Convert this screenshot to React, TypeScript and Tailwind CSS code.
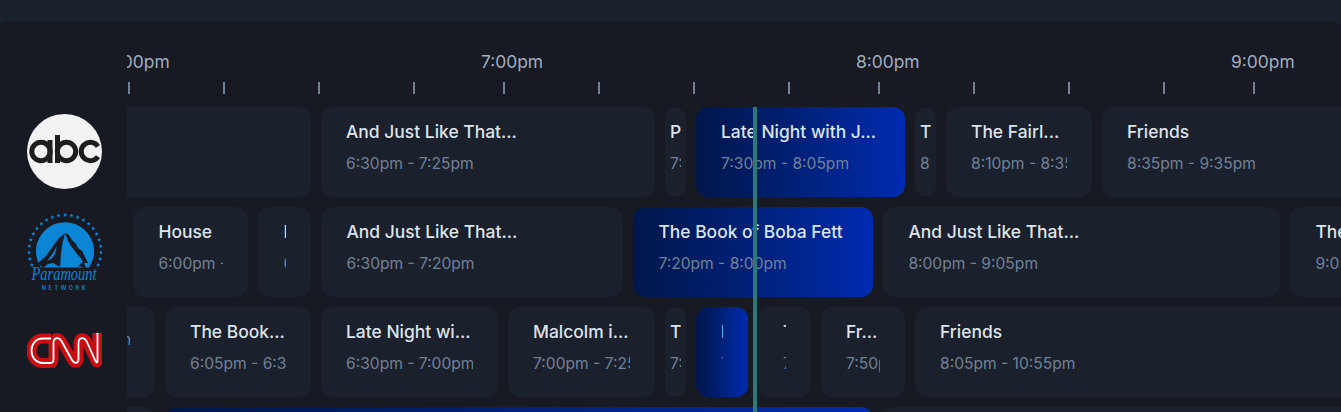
const font = { fontFamily: "Inter, sans-serif" };

type P = { w: number; title?: string; time?: string; pad?: "n" | "w"; active?: boolean };

function Card({ w, title, time, pad = "n", active }: P) {
  return (
    <div
      className={`h-[90px] shrink-0 rounded-xl flex items-start overflow-hidden ${active ? "bg-gradient-to-r from-[#00174a] via-[#00217a] to-[#002bb0]" : "bg-[#1a202c]"} ${pad === "w" ? "px-[5px]" : "px-[25px]"}`}
      style={{ width: w }}
    >
      <div className="w-full overflow-hidden pt-[13px]">
        <div className="text-[17.45px] font-medium leading-6 text-[#dde3eb] whitespace-nowrap">{title}</div>
        <div className="mt-[8px] text-[15.6px] leading-6 text-[#718096] whitespace-nowrap">{time}</div>
      </div>
    </div>
  );
}

function Row({ start, items }: { start: number; items: P[] }) {
  return (
    <div className="flex gap-[10px] h-[90px]" style={{ marginLeft: start }}>
      {items.map((it, i) => (
        <Card key={i} {...it} />
      ))}
    </div>
  );
}

const rows: { start: number; items: P[] }[] = [
  {
    start: -60,
    items: [
      { w: 244 },
      { w: 334, title: "And Just Like That...", time: "6:30pm - 7:25pm" },
      { w: 21, title: "P", time: "7:25pm - 7:30pm", pad: "w" },
      { w: 209, title: "Late Night with J...", time: "7:30pm - 8:05pm", active: true },
      { w: 21, title: "T", time: "8:05pm - 8:10pm", pad: "w" },
      { w: 146, title: "The Fairl...", time: "8:10pm - 8:35pm" },
      { w: 400, title: "Friends", time: "8:35pm - 9:35pm" },
    ],
  },
  {
    start: 6.4,
    items: [
      { w: 115, title: "House", time: "6:00pm - 6:20pm" },
      { w: 53, title: "House", time: "6:20pm - 6:30pm" },
      { w: 302, title: "And Just Like That...", time: "6:30pm - 7:20pm" },
      { w: 240, title: "The Book of Boba Fett", time: "7:20pm - 8:00pm", active: true },
      { w: 397, title: "And Just Like That...", time: "8:00pm - 9:05pm" },
      { w: 300, title: "The Fairly OddParents", time: "9:05pm - 9:50pm" },
    ],
  },
  {
    start: -150,
    items: [
      { w: 178, time: "5:30pm - 6:05pm" },
      { w: 146, title: "The Book...", time: "6:05pm - 6:30pm" },
      { w: 177, title: "Late Night wi...", time: "6:30pm - 7:00pm" },
      { w: 147, title: "Malcolm i...", time: "7:00pm - 7:25pm" },
      { w: 21, title: "T", time: "7:25pm - 7:30pm", pad: "w" },
      { w: 52, title: "Late", time: "7:30pm - 7:40pm", active: true },
      { w: 53, title: "The", time: "7:40pm - 7:50pm" },
      { w: 84, title: "Fr...", time: "7:50pm - 8:05pm" },
      { w: 500, title: "Friends", time: "8:05pm - 10:55pm" },
    ],
  },
  {
    start: -40,
    items: [{ w: 68 }, { w: 708, active: true }, { w: 600 }],
  },
];

const tickGaps = [95, 95, 95, 90, 95, 95, 95, 90, 95, 95, 95, 90, 95, 95];

function AbcLogo() {
  const ink = "#1f1d1c";
  return (
    <svg width="75" height="75" viewBox="0 0 75 75">
      <circle cx="37.5" cy="37.5" r="37.5" fill="#f2f2f2" />
      <g fill="none" stroke={ink} strokeWidth="5">
        <circle cx="14" cy="37.5" r="9.2" />
        <circle cx="39.5" cy="37.5" r="9.2" />
        <path d="M71 32.3A9.2 9.2 0 1 0 71 42.7" />
      </g>
      <rect x="20.5" y="26" width="5" height="23" fill={ink} />
      <rect x="28" y="21" width="5" height="28" fill={ink} />
    </svg>
  );
}

function ParamountLogo() {
  const blue = "#0b86d6";
  const dark = "#171923";
  const stars = [];
  for (let i = 0; i < 23; i++) {
    const a = ((-113 + (i * 226) / 22) * Math.PI) / 180;
    const cx = 39 + 36 * Math.sin(a);
    const cy = 38 - 36 * Math.cos(a);
    const pts: string[] = [];
    for (let k = 0; k < 10; k++) {
      const r = k % 2 === 0 ? 2.2 : 1;
      const t = (k * Math.PI) / 5;
      pts.push(`${(cx + r * Math.sin(t)).toFixed(2)},${(cy - r * Math.cos(t)).toFixed(2)}`);
    }
    stars.push(<polygon key={i} points={pts.join(" ")} fill={blue} />);
  }
  return (
    <svg width="76" height="80" viewBox="0 0 76 80">
      {stars}
      <path d="M15 54.5A29 29 0 1 1 63 54.5Z" fill={blue} />
      <path d="M12 50L20 43L27 33L33 25L39 20L36.5 30L35 40L34 54L27 50L22 51L17 55Z" fill={dark} />
      <path d="M21 48L27 40L31 33L29 41L25 46Z" fill={blue} />
      <path d="M39 20L43 22L46 27L50 31L52 35L56 38L59 44L62 50L58 50L60 55L52 53L57 49L54 44L51 41L48 37L45 33L42 28Z" fill={dark} />
      <text x="38" y="67" textAnchor="middle" fill={blue} fontFamily="'Liberation Serif', serif" fontStyle="italic" fontSize="18" textLength="65" lengthAdjust="spacingAndGlyphs">Paramount</text>
      <text x="39" y="77" textAnchor="middle" fill={blue} fontFamily="Inter, sans-serif" fontSize="5.5" fontWeight="600" letterSpacing="2.6">NETWORK</text>
    </svg>
  );
}

function CnnLogo() {
  const d =
    "M24 5.5H16C8.5 5.5 4.5 11 4.5 17.5C4.5 24 8.5 30 16 30H23C25.5 30 26.5 29 26.5 26.5V10C26.5 4 32 4 34.5 8L45 27C47.5 31.5 51.5 30 51.5 26.5V10C51.5 4 57 4 59.5 8L68 27C69.5 30 70.5 30 70.5 28V0";
  return (
    <svg width="75" height="35" viewBox="0 0 75 35">
      <path d={d} fill="none" stroke="#c90f14" strokeWidth="10" strokeLinejoin="round" />
      <path d={d} fill="none" stroke="#ffffff" strokeWidth="1.8" strokeLinejoin="round" />
    </svg>
  );
}

export default function App() {
  return (
    <div className="h-[412px] w-[1341px] bg-[#1a202c] overflow-hidden" style={font}>
      <div className="mt-[21px] h-[391px] relative bg-[#171923] rounded-t-lg flex overflow-hidden">
        <div className="w-[127px] shrink-0 pt-[93px] z-10 bg-[#171923]">
          <div className="h-[75px] mb-[25px] pl-[27px]"><AbcLogo /></div>
          <div className="h-[75px] mb-[25px] pl-[26px] -mt-[1px]"><ParamountLogo /></div>
          <div className="h-[75px] pl-[27px] pt-[20px]"><CnnLogo /></div>
        </div>
        <div className="flex-1 min-w-0 overflow-hidden">
          <div className="h-[61px] pt-[29px] flex text-[17.4px] leading-6 text-[#a0aec0] -ml-[21px]">
            {["6:00pm", "7:00pm", "8:00pm", "9:00pm"].map((t) => (
              <div key={t} className="w-[375px] shrink-0">{t}</div>
            ))}
          </div>
          <div className="h-[25px] flex items-start ml-[1px]">
            {tickGaps.map((w, i) => (
              <div key={i} className="shrink-0" style={{ width: w }}>
                <div className="w-[2px] h-[12px] bg-[#718096]" />
              </div>
            ))}
          </div>
          <div className="flex flex-col gap-[10px]">
            {rows.map((r, i) => (
              <Row key={i} start={r.start} items={r.items} />
            ))}
          </div>
        </div>
        <div className="absolute left-[753px] top-[86px] bottom-0 w-[4px] bg-[#2b7a78]" />
      </div>
    </div>
  );
}
